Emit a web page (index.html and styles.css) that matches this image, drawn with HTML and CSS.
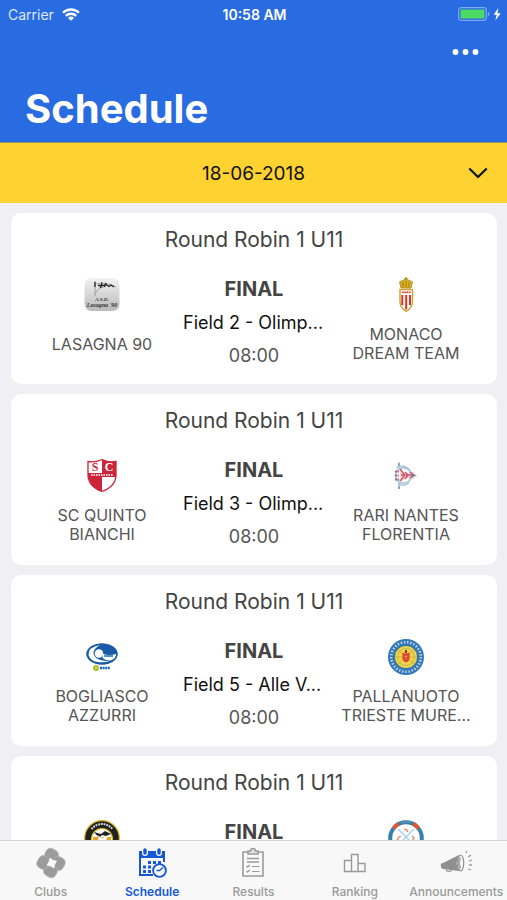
FILE: index.html
```html
<!DOCTYPE html>
<html lang="en">
<head>
<meta charset="utf-8">
<meta name="viewport" content="width=device-width, initial-scale=1">
<title>Schedule</title>
<link rel="stylesheet" href="styles.css">
</head>
<body>
<div class="app">
  <header class="header">
    <div class="status">
      <div class="carrier">
        <span>Carrier</span>
        <svg class="wifi" viewBox="0 0 18 13" aria-hidden="true"><g fill="none" stroke="#fff" stroke-width="2.300"><path d="M1 4.800a11.400 11.400 0 0 1 16 0"/><path d="M3.800 7.900a7.400 7.400 0 0 1 10.400 0"/></g><path d="M9 12.800 6 9.900a4.300 4.300 0 0 1 6 0z" fill="#fff"/></svg>
      </div>
      <time class="clock">10:58 AM</time>
      <div class="power">
        <svg class="battery" viewBox="0 0 43 14" aria-hidden="true"><rect x=".7" y=".7" width="27.600" height="12.600" rx="2.500" fill="none" stroke="#7fa8f2" stroke-width="1.200"/><rect x="2.500" y="2.500" width="24" height="9" rx="1" fill="#4cd964"/><path d="M29.800 4.800q1.700.4 1.700 2.200t-1.700 2.200z" fill="#7fa8f2"/><path d="M40.300 1 35.700 7.800h3L37.300 13.400l5.400-7.200h-3.200z" fill="#fff"/></svg>
      </div>
    </div>
    <button class="more" type="button" aria-label="More options">
      <svg viewBox="0 0 26 6" aria-hidden="true"><g fill="#fff"><circle cx="3" cy="3" r="2.900"/><circle cx="13" cy="3" r="2.900"/><circle cx="23" cy="3" r="2.900"/></g></svg>
    </button>
    <h1 class="title">Schedule</h1>
  </header>

  <div class="datebar">
    <select class="date" aria-label="Match day"><option>18-06-2018</option></select>
    <svg class="chevron" viewBox="0 0 20 12" aria-hidden="true"><path d="m1.300 1.500 8.700 8.500 8.700-8.500" fill="none" stroke="#111" stroke-width="2.200"/></svg>
  </div>

  <main class="list">
    <article class="card">
      <h2 class="round">Round Robin 1 U11</h2>
      <div class="match">
        <div class="team">
          <svg class="logo" viewBox="0 0 36 36" aria-hidden="true"><defs><linearGradient id="silver" x2="0" y2="1"><stop stop-color="#f2f2f2"/><stop offset="1" stop-color="#b9b9b9"/></linearGradient></defs><rect x=".5" y="1" width="35" height="33" rx="7" fill="url(#silver)"/><path d="M11 4v15M12 7q9-3 20 3M11 17q4-7 9-7" fill="none" stroke="#888" stroke-width=".7"/><path d="M11 5v5M14 8.500h5l3-1 3 2 2-1.500 3 2M18 5.500l-1.500 5.500M22 6l-1.500 4" fill="none" stroke="#222" stroke-width="1.300"/><text class="crest-script" x="18" y="23.500" font-size="5">A.S.D.</text><text class="crest-script" x="18" y="29.500" font-size="6">Lasagna '90</text></svg>
          <p class="name">LASAGNA 90</p>
        </div>
        <div class="info"><strong class="stage">FINAL</strong><p class="field">Field 2 - Olimp...</p><time class="hour">08:00</time></div>
        <div class="team">
          <svg class="logo" viewBox="0 0 36 36" aria-hidden="true"><path d="M18 0v4M16.500 1.500h3" stroke="#b98b18" stroke-width="1.200"/><path d="m13 11-1.500-6 3-1.500L18 2l3.500 1.500 3 1.500-1.500 6z" fill="#d9b323" stroke="#a78312" stroke-width=".8"/><path d="M15 5v5M18 4v6M21 5v5" stroke="#8e6d12" stroke-width=".8"/><path d="M12 12.500h12.500v12q0 6-6.300 10-6.200-4-6.200-10z" fill="#fff" stroke="#c9a52e" stroke-width="1.400"/><path d="M13 13h10.500v4H13z" fill="#fae5dd"/><path d="M14.300 18v10M18.200 18v14.500M22 18v10" stroke="#d9342b" stroke-width="2"/><path d="M14 15.300h8.500" stroke="#d9342b" stroke-width="1.500" stroke-dasharray="1.500 .8"/></svg>
          <p class="name">MONACO<br>DREAM TEAM</p>
        </div>
      </div>
    </article>

    <article class="card">
      <h2 class="round">Round Robin 1 U11</h2>
      <div class="match">
        <div class="team">
          <svg class="logo" viewBox="0 0 36 36" aria-hidden="true"><path d="M4 3.500q7 1.500 14-2 7 3.500 14 2v13q0 12-14 17-14-5-14-17z" fill="#fff"/><path d="M18 1.500q7 3.500 14 2V16H18zM4.500 17H18v16.500Q5 29 4.500 17z" fill="#cc2438"/><path d="M4 15h28v4H4z" fill="#cc2438"/><path d="M7 17h22" stroke="#f7cdd2" stroke-width="1.800" stroke-dasharray="1.600 .9"/><path d="M4 3.500q7 1.500 14-2 7 3.500 14 2v13q0 12-14 17-14-5-14-17z" fill="none" stroke="#cc2438" stroke-width="1.300"/><text class="crest-letter" x="11" y="13" fill="#cc2438">S</text><text class="crest-letter" x="25" y="13" fill="#fff">C</text></svg>
          <p class="name">SC QUINTO<br>BIANCHI</p>
        </div>
        <div class="info"><strong class="stage">FINAL</strong><p class="field">Field 3 - Olimp...</p><time class="hour">08:00</time></div>
        <div class="team">
          <svg class="logo" viewBox="0 0 36 36" aria-hidden="true"><path d="M11 4v27" stroke="#9db8cb" stroke-width="1"/><path d="M11 5v3M11 28v3" stroke="#7196b2" stroke-width="1.400"/><circle cx="15.500" cy="17.500" r="7.800" fill="#fff" stroke="#b9cfdf" stroke-width="2.400"/><path d="M12 12l6 4 8-2v7l-8-1-5 4z" fill="#f3ccd2"/><path d="m12 11 5 6-5 6M17 14l3 3-3 4M18 17h5M22 14l4 3-4 3M13 17h4" fill="none" stroke="#d25267" stroke-width="1.300"/><path d="M7 13.500h4M7 17.500h4M7 21.500h4" stroke="#b65f7d" stroke-width="2" stroke-dasharray="2 .7"/><path d="m23 15.500 6 2-6 2z" fill="#7a7f98"/><path d="M8 10q7-5 14 2M10 26q6 3 11-1" fill="none" stroke="#8bacc6" stroke-width="1"/></svg>
          <p class="name">RARI NANTES<br>FLORENTIA</p>
        </div>
      </div>
    </article>

    <article class="card">
      <h2 class="round">Round Robin 1 U11</h2>
      <div class="match">
        <div class="team">
          <svg class="logo" viewBox="0 0 36 36" aria-hidden="true"><ellipse cx="18" cy="15" rx="15.500" ry="10.500" fill="#195ba8"/><path d="M4.500 16Q4 8 16 6q-6 3-6.500 8 1 8 16 8-5 2-12 1-7-1-9-7z" fill="#fff"/><circle cx="15" cy="14.500" r="4.300" fill="#fff"/><path d="M19 15q6 2 13.500 0-1 5-6 6.500-4 .5-8-2.500z" fill="#fff"/><path d="M20 17h9" stroke="#195ba8" stroke-width="1.400"/><ellipse cx="18" cy="15" rx="15" ry="10" fill="none" stroke="#195ba8" stroke-width="1.200"/><circle cx="12" cy="29" r="2.900" fill="#9dbd28"/><path d="m11 27.500 2.500 2M13 27.500l-2 3" stroke="#e9e74d" stroke-width="1"/><path d="M16 29h10" stroke="#1a68b1" stroke-width="2.500" stroke-dasharray="2 .6"/></svg>
          <p class="name">BOGLIASCO<br>AZZURRI</p>
        </div>
        <div class="info"><strong class="stage">FINAL</strong><p class="field">Field 5 - Alle V...</p><time class="hour">08:00</time></div>
        <div class="team">
          <svg class="logo" viewBox="0 0 36 36" aria-hidden="true"><circle cx="18" cy="18" r="18" fill="#3478b8"/><circle cx="18" cy="18" r="14.800" fill="none" stroke="#c4dcf0" stroke-width="2.400" stroke-dasharray="1.400 1.800"/><circle cx="18" cy="18" r="11.600" fill="#f0d646" stroke="#2b72a8"/><circle cx="18" cy="18" r="8.500" fill="none" stroke="#b9b95a" stroke-width="1"/><path d="m10 11 16 14M10 25l16-14M7 18h22" stroke="#d8a93a" stroke-width="1"/><path d="M14.500 13.500q3.500 2 7 0v5.500q0 3-3.500 4.500-3.500-1.500-3.500-4.500z" fill="#d6452f"/><path d="M18 11v3" stroke="#b52528" stroke-width="2"/><path d="M18 16v5M16.500 17.500h3" stroke="#eb9160" stroke-width=".8"/></svg>
          <p class="name">PALLANUOTO<br>TRIESTE MURE...</p>
        </div>
      </div>
    </article>

    <article class="card">
      <h2 class="round">Round Robin 1 U11</h2>
      <div class="match">
        <div class="team">
          <svg class="logo" viewBox="0 0 36 36" aria-hidden="true"><circle cx="18" cy="18" r="17.300" fill="#20231f" stroke="#dbb52c" stroke-width="1.200"/><path d="M7.500 9a13.500 13.500 0 0 1 21 0" fill="none" stroke="#ddd" stroke-width="2" stroke-dasharray="1.800 .9"/><circle cx="18" cy="19" r="10.500" fill="#fff" stroke="#dbb52c" stroke-width="1.200"/><path d="M9 17h18v5H9z" fill="#e8a51e"/><path d="m10 12 7 2 4-3 6 3-5 2-4-1-3 3z" fill="#222"/><path d="m13 15 5 3 6-2-2 4h-6z" fill="#fff"/><path d="M15 18v4M21 17v5" stroke="#fff" stroke-width="1.500"/></svg>
        </div>
        <div class="info"><strong class="stage">FINAL</strong></div>
        <div class="team">
          <svg class="logo" viewBox="0 0 36 36" aria-hidden="true"><circle cx="18" cy="18" r="15.800" fill="#fff" stroke="#3a7fae" stroke-width="4"/><path d="M5.500 8.500q2-3 5-4.700M25.500 3.800q3 1.700 5 4.700" fill="none" stroke="#e4572e" stroke-width="4"/><path d="M13 2.700q5-1.400 10 0" fill="none" stroke="#8dbad8" stroke-width="1" stroke-dasharray="1 .7"/><path d="m10 9 16 16M26 9 10 25" stroke="#a6d2ef" stroke-width="1.500"/><path d="m16 9 3 1 1 2M9 20l2-3 2-1M24 16l2 2-2 3" fill="none" stroke="#e87a5c" stroke-width="1.300"/></svg>
        </div>
      </div>
    </article>
  </main>

  <nav class="tabs" aria-label="Main">
    <a class="tab" href="#clubs">
      <svg class="icon" viewBox="0 0 30 30" aria-hidden="true"><g fill="#9b9b9b" stroke="#b4b4b4" stroke-width=".7"><rect x="9" y="1" width="13" height="12" rx="4.500" transform="rotate(30 15.500 7)"/><rect x="16.500" y="9" width="12" height="13" rx="4.500" transform="rotate(30 22.500 15.500)"/><rect x="8" y="17" width="13" height="12" rx="4.500" transform="rotate(30 14.500 23)"/><rect x="1.500" y="8" width="12" height="13" rx="4.500" transform="rotate(30 7.500 14.500)"/></g><path d="m14 9.500 3 2.500 4 1-2 3.500-1 4-3-2-4.500-1 2-3.500z" fill="#f8f8f8"/></svg>
      <span>Clubs</span>
    </a>
    <a class="tab active" href="#schedule" aria-current="page">
      <svg class="icon" viewBox="0 0 30 30" aria-hidden="true"><path d="M2 3h26v7H2z" fill="#1558d6"/><path d="M3 9v18h13M27 9v5" fill="none" stroke="#1558d6" stroke-width="2"/><path d="M8 3v2M22 3v2" stroke="#f8f8f8" stroke-width="6" stroke-linecap="round"/><path d="M8 2v3M22 2v3" stroke="#1558d6" stroke-width="3.400" stroke-linecap="round"/><g fill="#1558d6"><path d="M11 13h3v3h-3zM16 13h3v3h-3zM21 13h3v3h-3zM6 17.500h3v3H6zM11 17.500h3v3h-3zM6 22h3v3H6zM11 22h3v3h-3z"/></g><circle cx="22.500" cy="22.500" r="6.400" fill="#f8f8f8" stroke="#1558d6" stroke-width="1.900"/><path d="M19.500 22.500h3l3.500-3" fill="none" stroke="#1558d6" stroke-width="1.500"/></svg>
      <span>Schedule</span>
    </a>
    <a class="tab" href="#results">
      <svg class="icon" viewBox="0 0 30 30" aria-hidden="true"><g fill="none" stroke="#9a9a9a" stroke-width="1.600"><path d="M10 4H5v24h20V4h-5"/><path d="M10 6V3h2.500a2.500 2.500 0 0 1 5 0H20v3z" fill="#e4e4e4"/><path d="M9 10.500h12M9 14h12"/><path d="m8.500 18 1.200 1.200 2-2.200M14 18.500h7.500M8.500 23l1.200 1.200 2-2.200M14 23.500h7.500" stroke-width="1.200"/></g></svg>
      <span>Results</span>
    </a>
    <a class="tab" href="#ranking">
      <svg class="icon" viewBox="0 0 30 30" aria-hidden="true"><path d="M4.500 12.500h7v11h-7zM11.500 6.500h6.500v17h-6.500zM18 15.500h7v8h-7z" fill="none" stroke="#9a9a9a" stroke-width="1.400"/></svg>
      <span>Ranking</span>
    </a>
    <a class="tab" href="#announcements">
      <svg class="icon" viewBox="0 0 30 30" aria-hidden="true"><path d="M0 16q-1 4 2 5l16 2Q13 15 18 7L2 15q-2 0-2 1z" fill="#8f8f8f"/><ellipse cx="19.500" cy="15" rx="3.200" ry="8" fill="#f8f8f8" stroke="#8f8f8f" stroke-width="1.200"/><path d="M18.500 8q-4 6 0 14 1-1 1.500-3-2-4 0-8z" fill="#aaa"/><path d="M5 21.500q1 3 6 1" fill="none" stroke="#999" stroke-width="1.300"/><path d="m25 5 .8-2M27 9l3-2M28 13l3-1M28 17h3M27 21l3 1" stroke="#999" stroke-width="1.300"/></svg>
      <span>Announcements</span>
    </a>
  </nav>
</div>
</body>
</html>
```
FILE: styles.css
```css
* { box-sizing: border-box; }

body {
  margin: 0;
  font-family: Inter, "Liberation Sans", sans-serif;
  background: #efeff4;
  color: #444;
}

h1, h2, p { margin: 0; }

.app {
  display: flex;
  flex-direction: column;
  height: 100vh;
}

.header {
  display: flex;
  flex-direction: column;
  background: #296be0;
  color: #fff;
  border-bottom: 1px solid #8c9470;
}

.status {
  display: grid;
  grid-template-columns: 1fr auto 1fr;
  align-items: center;
  height: 28px;
  padding: 0 6px 0 8px;
  font-size: 14px;
}

.carrier {
  display: flex;
  align-items: center;
  gap: 8px;
  color: #dfe9fb;
}

.wifi { width: 18px; height: 13px; }
.clock { font-weight: 600; }
.power { display: flex; justify-content: flex-end; }
.battery { width: 43px; height: 14px; }

.more {
  display: flex;
  align-self: flex-end;
  margin-right: 16px;
  padding: 21px 12px;
  border: 0;
  background: none;
}

.more svg { width: 27px; height: 6px; }

.title {
  padding: 9px 25px 9px;
  font-size: 40px;
  line-height: 48px;
  font-weight: 700;
}

.datebar {
  display: grid;
  align-items: center;
  background: #fdd231;
}

.date, .chevron { grid-area: 1 / 1; }

.date {
  width: 100%;
  height: 60px;
  padding: 0 40px;
  border: 0;
  appearance: none;
  background: none;
  font: 19px Inter, "Liberation Sans", sans-serif;
  color: #111;
  text-align: center;
  text-align-last: center;
}

.chevron {
  justify-self: end;
  width: 20px;
  height: 12px;
  margin-right: 19px;
  pointer-events: none;
}

.list {
  flex: 1;
  min-height: 0;
  display: flex;
  flex-direction: column;
  gap: 10px;
  padding: 10px 10px 0 11px;
  overflow-y: auto;
  scrollbar-width: none;
}

.card {
  flex: none;
  padding: 15px 15px 16px;
  border-radius: 10px;
  background: #fff;
  text-align: center;
}

.round {
  margin-bottom: 25px;
  font-size: 21px;
  line-height: 24px;
  font-weight: 400;
}

.match {
  display: grid;
  grid-template-columns: repeat(3, minmax(0, 1fr));
}

.team {
  display: flex;
  flex-direction: column;
  align-items: center;
  gap: 12px;
}

.logo { width: 36px; height: 36px; }

.name {
  display: grid;
  align-content: center;
  min-height: 38px;
  font-size: 16px;
  line-height: 19px;
  color: #555;
}

.info {
  display: flex;
  flex-direction: column;
  gap: 8px;
  line-height: 25px;
  white-space: nowrap;
}

.stage { font-size: 20px; font-weight: 700; }

.field {
  padding-left: 5px;
  font-size: 18px;
  color: #111;
  text-align: left;
}

.hour { font-size: 18px; color: #555; }

.crest-script {
  font-family: "Liberation Serif", serif;
  font-style: italic;
  font-weight: 700;
  fill: #333;
  text-anchor: middle;
}

.crest-letter {
  font-family: "Liberation Serif", serif;
  font-size: 12px;
  font-weight: 700;
  text-anchor: middle;
}

.tabs {
  display: grid;
  grid-template-columns: repeat(5, minmax(0, 1fr));
  height: 60px;
  border-top: 1px solid #d4d4d6;
  background: #f8f8f8;
}

.tab {
  display: flex;
  flex-direction: column;
  align-items: center;
  gap: 6px;
  padding-top: 7px;
  font-size: 12px;
  line-height: 16px;
  font-weight: 500;
  color: #999;
  text-decoration: none;
}

.tab.active { color: #1558d6; font-weight: 600; }
.icon { width: 30px; height: 30px; overflow: visible; }
```
